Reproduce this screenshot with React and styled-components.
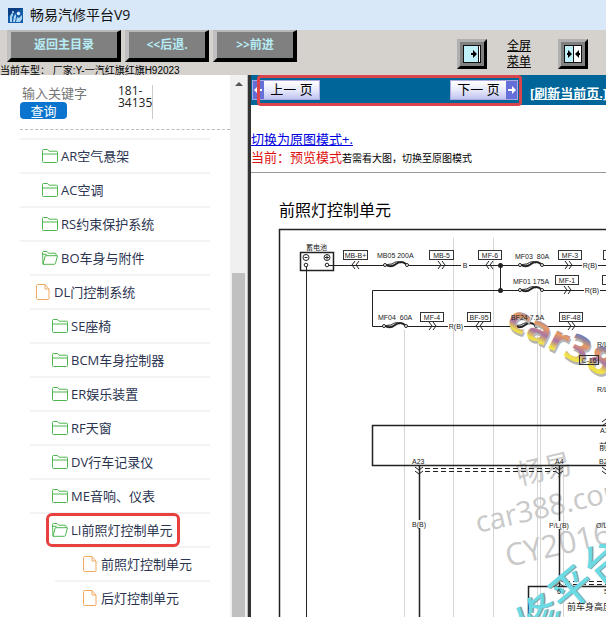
import React from 'react';
import styled, { createGlobalStyle } from 'styled-components';

const Global = createGlobalStyle`
  * { box-sizing: border-box; }
  html, body { margin: 0; height: 100%; }
  #root { height: 100vh; }
  body { font-family: "Open Sans", "Noto Sans CJK SC", sans-serif; overflow: hidden; }
  button { font-family: inherit; padding: 0; margin: 0; cursor: pointer; }
`;

const Window = styled.div`
  display: flex;
  flex-direction: column;
  height: 100vh;
  background: #fff;
`;

const TitleBar = styled.header`
  display: flex;
  align-items: center;
  gap: 7px;
  flex: none;
  height: 30px;
  padding-left: 8px;
  background: #d9e8f8;
  h1 { margin: 0; font-size: 14px; line-height: 20px; font-weight: 400; color: #111; }
`;

const ToolBar = styled.nav`
  flex: none;
  display: flex;
  justify-content: space-between;
  height: 45px;
  padding-right: 18px;
  background: #d5d2cd;
`;

const ToolLeft = styled.div`
  display: flex;
  flex-direction: column;
`;

const ButtonRow = styled.div`
  display: flex;
  gap: 4px;
  padding-left: 7px;
`;

const BevelButton = styled.button`
  width: ${(p) => (p.$wide ? 114 : 84)}px;
  height: 32px;
  border: 4px solid;
  border-top-width: 2px;
  border-color: #b8b8b8 #000 #000 #c0c0c0;
  background: #808080;
  color: #b6ecf5;
  font-size: 12px;
  font-weight: 700;
  line-height: 24px;
`;

const Status = styled.p`
  margin: 0;
  padding-top: 2px;
  font: 10px/13px "Liberation Sans", "Noto Sans CJK SC", sans-serif;
  white-space: pre;
`;

const ToolRight = styled.div`
  display: flex;
  align-items: center;
  gap: 20px;
  padding-top: 2px;
`;

const IconButton = styled.button`
  display: grid;
  place-items: center;
  width: 30px;
  height: 30px;
  border: 3px solid;
  border-color: #b0b0b0 #000 #000 #b0b0b0;
  background: #808080;
  svg { display: block; }
`;

const FullLink = styled.a`
  width: 31px;
  padding-right: 7px;
  font-size: 12px;
  line-height: 16px;
  color: #000;
`;

const Body = styled.div`
  flex: 1;
  display: flex;
  min-height: 0;
`;

const Sidebar = styled.aside`
  flex: none;
  display: flex;
  width: 251px;
  border-right: 3px solid #333;
`;

const SidePane = styled.div`
  flex: 1;
  min-width: 0;
  overflow: hidden;
  padding-left: 20px;
`;

const ScrollTrack = styled.div`
  width: 18px;
  padding: 6px 2px 0;
  border-right: 1px solid #bbb;
  background: #f0f0f0;
  display: flex;
  flex-direction: column;
  align-items: center;
`;

const Thumb = styled.div`
  width: 13px;
  flex: 1;
  margin-top: 187px;
  background: #c0c0c0;
`;

const Search = styled.form`
  display: flex;
  height: 55px;
  padding-top: 9px;
  border-bottom: 1px dashed #bbb;
`;

const SearchFields = styled.div`
  display: flex;
  flex-direction: column;
  align-items: flex-start;
  width: 98px;
`;

const Keyword = styled.input`
  width: 90px;
  height: 18px;
  padding: 0 2px;
  border: 0;
  outline: 0;
  background: none;
  font: 13px/18px "Open Sans", "Noto Sans CJK SC", sans-serif;
  &::placeholder { color: #757575; opacity: 1; }
`;

const Query = styled.button`
  width: 47px;
  height: 17px;
  border: 0;
  border-radius: 4px;
  background: #0a74ce;
  color: #fff;
  font-size: 13px;
  line-height: 16px;
`;

const Count = styled.div`
  width: 35px;
  height: 34px;
  margin-top: 1px;
  border-right: 1px solid #ccc;
  font-size: 12px;
  line-height: 12px;
  color: #222;
`;

const Tree = styled.ul`
  list-style: none;
  margin: 8px 20px 0 0;
  padding: 0;
`;

const TreeItem = styled.li`
  height: 34px;
  margin-left: ${(p) => p.$indent}px;
  padding-left: ${(p) => p.$pad}px;
  border-top: 2px solid #f3f3f3;
  display: flex;
  align-items: center;
`;

const TreeLink = styled.a`
  display: flex;
  align-items: center;
  gap: ${(p) => (p.$file ? 4 : 3)}px;
  color: #2b3450;
  font-size: 13px;
  line-height: 20px;
  text-decoration: none;
  white-space: nowrap;
  svg { flex: none; }
  ${(p) => p.$marked && `
    padding: 5px 6px 5px 4px;
    margin: 0 -4px;
    outline: 3px solid #e8403f;
    outline-offset: -1px;
    border-radius: 4px;
  `}
`;

const Main = styled.main`
  flex: 1;
  min-width: 0;
  display: flex;
  flex-direction: column;
  overflow: hidden;
`;

const PageBar = styled.nav`
  flex: none;
  display: flex;
  align-items: center;
  height: 30px;
  background: #00669a;
  white-space: nowrap;
`;

const Pager = styled.div`
  position: relative;
  display: flex;
  justify-content: space-between;
  align-items: center;
  flex: none;
  width: 265px;
  height: 31px;
  margin-left: 6px;
  padding: 0 4px 0 3px;
  &::after {
    content: "";
    position: absolute;
    inset: 0;
    border: 3px solid #dc444b;
    border-radius: 4px;
    pointer-events: none;
  }
`;

const PageButton = styled.button`
  display: flex;
  align-items: stretch;
  height: 20px;
  width: 68px;
  margin-left: ${(p) => (p.$prev ? -8 : 0)}px;
  border: 1px solid #a9abe0;
  background: linear-gradient(#fff, #e8e9fb 50%, #bfc4f0);
  font-size: 13px;
  line-height: 17px;
  color: #000;
  span { flex: 1; white-space: pre; }
  svg { flex: none; background: #6470d8; }
`;

const Refresh = styled.a`
  margin-left: 8px;
  padding-top: 6px;
  font-size: 13px;
  line-height: 18px;
  font-weight: 700;
  color: #fff;
`;

const Mode = styled.section`
  flex: none;
  height: 68px;
  padding-top: 25px;
  border-bottom: 1px solid #999;
  font-size: 13px;
  line-height: 18px;
  white-space: nowrap;
  a { display: block; width: max-content; color: #0000e0; }
  strong { font-weight: 400; color: #e01010; }
  small { font-size: 10px; }
`;

const Heading = styled.h2`
  flex: none;
  margin: 0;
  padding: 25px 0 0 28px;
  font-size: 16px;
  line-height: 24px;
  font-weight: 400;
  color: #000;
`;

const Diagram = styled.svg`
  display: block;
  width: 100%;
  flex: 1;
  min-height: 0;
`;

const Folder = () => (
  <svg width="16" height="14" viewBox="0 0 16 14" fill="none" stroke="#4fb64f">
    <path d="M.5 12.5V1.5q0-1 1-1h4l1.5 1.7h7.500q1 0 1 1v9.300q0 1-1 1h-13q-1 0-1-1zM.5 5h15" />
  </svg>
);
const OpenFolder = () => (
  <svg width="16" height="14" viewBox="0 0 16 14" fill="none" stroke="#4fb64f">
    <path d="M1 13.200.5 1.500q0-1 1-1H5l1.500 1.700H13q1 0 1 1V4.500M1 13.200 3.300 4.700h12.200L13.500 12.300q-.3 1-1.300 1H1zM.7 3.300h4" />
  </svg>
);
const FileIcon = () => (
  <svg width="14" height="16" viewBox="0 0 14 16" fill="none" stroke="#f0a860">
    <path d="M1.500.500h7.500l4 4.500v9.500q0 1-1 1h-10.500q-1 0-1-1v-13q0-1 1-1zM9 .500V5h4" />
  </svg>
);

const Logo = () => (
  <svg width="15" height="15" viewBox="0 0 15 15">
    <rect width="15" height="15" fill="#145ca8" />
    <path d="M0 0h15L0 8z" fill="#0b3f83" />
    <path d="M2 14V9l1-3 2-1v2l-1 2v5zM5 14l1-6 2-2v3l-1 5zM8 14l1-5 2 1 3-3v4l-2 3z" fill="#a9d6f2" />
    <circle cx="10.500" cy="5.500" r="1.700" fill="#d6effb" />
    <circle cx="5" cy="4" r="1" fill="#d6effb" />
  </svg>
);

const PANEL = '#c0f0fa';

const rows = [
  ['AR空气悬架', 'folder', 0, 22],
  ['AC空调', 'folder', 0, 22],
  ['RS约束保护系统', 'folder', 0, 22],
  ['BO车身与附件', 'open', 0, 22],
  ['DL门控制系统', 'file', 10, 6],
  ['SE座椅', 'folder', 10, 22],
  ['BCM车身控制器', 'folder', 10, 22],
  ['ER娱乐装置', 'folder', 10, 22],
  ['RF天窗', 'folder', 10, 22],
  ['DV行车记录仪', 'folder', 10, 22],
  ['ME音响、仪表', 'folder', 10, 22],
  ['LI前照灯控制单元', 'open', 10, 22, true],
  ['前照灯控制单元', 'file', 35, 28],
  ['后灯控制单元', 'file', 35, 28],
];
const icons = { folder: Folder, open: OpenFolder, file: FileIcon };

const Tag = ({ x, y, w = 26, children }) => (
  <g>
    <rect x={x} y={y} width={w} height="9" fill="#fff" stroke="#333" />
    <text x={x + w / 2} y={y + 7} textAnchor="middle">{children}</text>
  </g>
);
const Chevrons = ({ x, y, left, turn = 0 }) => (
  <path
    d={left ? 'M0-4-3 0 0 4M4-4 1 0 4 4' : 'M-3-4 0 0-3 4M1-4 4 0 1 4'}
    transform={`translate(${x} ${y}) rotate(${turn})`}
    fill="none" stroke="#222"
  />
);
const Fuse = ({ x, y }) => (
  <g transform={`translate(${x} ${y})`} fill="none" stroke="#222">
    <path d="M-10 0h20" stroke="#fff" strokeWidth="3" />
    <path d="M-10 0q5 3 10-1t10 0" strokeWidth="2" />
    <path d="M-10 0q3-1 6-1 5-4 9-1" />
    <circle cx="-11" r="1.500" fill="#fff" />
    <circle cx="11" r="1.500" fill="#fff" />
  </g>
);
const WireLabel = ({ x, y, w = 16, children }) => (
  <g>
    <rect x={x - w / 2} y={y - 4} width={w} height="8" fill="#fff" />
    <text x={x} y={y + 3} textAnchor="middle">{children}</text>
  </g>
);

const Wiring = () => (
  <Diagram role="img" aria-label="前照灯控制单元电路图">
    <defs>
      <linearGradient id="candy" x1="0" y1="0" x2="0.1" y2="1">
        <stop offset="0.250" stopColor="#7d7fae" />
        <stop offset="0.420" stopColor="#e89a62" />
        <stop offset="0.600" stopColor="#a874a6" />
        <stop offset="0.780" stopColor="#f0e04c" />
      </linearGradient>
    </defs>
    <g transform="translate(-251 -222)" fontFamily='"Liberation Sans", "Noto Sans CJK SC", sans-serif' fontSize="7" fill="#222">
      <path d="M404.500 330v287M453.500 238v379M493.500 238v379M537.500 290v327M540.500 290v327M563.500 465v152" stroke="#d6d6d6" />
      <g fontFamily='"Open Sans", "Noto Sans CJK SC", sans-serif' fontSize="29" fill="#c9c9c9">
        <text transform="translate(519 485) rotate(-13)" fontSize="28">畅易</text>
        <text transform="translate(478 533) rotate(-13)">car388.com</text>
        <text transform="translate(508 567) rotate(-13)" fontSize="31">CY2016</text>
      </g>
      <g fill="none" stroke="#222">
        <path d="M1200 229.500H279.500V1000" strokeWidth="1.500" />
        <path d="M334 265.500h900M306.500 268V1000M1200 290.500H372.500v36H606.500V425M500.500 265v26" />
        <path d="M1200 425.500H372.500v40H1200" strokeWidth="1.500" />
        <path d="M419.500 465V1000M559.500 465v121" strokeWidth="1.500" />
        <path d="M1200 586.500H528.500V1000" strokeWidth="1.500" />
        <path d="M425 468.500h130M425 471.500h130M565 581.500h60M565 584.500h60" strokeDasharray="5 3" />
        <rect x="300.500" y="252.500" width="33" height="18" strokeWidth="1.500" fill="#fff" />
        <circle cx="306" cy="257.500" r="3" />
        <circle cx="327" cy="257.500" r="3" />
        <path d="M304.500 257.500h3M325 257.500h4M327 255.500v4M327 265.500h7M306.500 266v5" />
        <circle cx="306" cy="265" r="1.800" fill="#fff" />
        <circle cx="327" cy="265" r="1.800" fill="#fff" />
      </g>
      <circle cx="500.500" cy="265.500" r="2.500" />
      <circle cx="500.500" cy="290.500" r="2.500" />
      <text x="306" y="250">蓄电池</text>
      <Tag x={343.5} y={250.5} w={24}>MB-B+</Tag>
      <Tag x={429.5} y={250.5} w={24}>MB-5</Tag>
      <Tag x={478.5} y={250.5} w={23}>MF-6</Tag>
      <Tag x={558.5} y={250.5} w={23}>MF-3</Tag>
      <Tag x={603.5} y={250.5} w={23}>A-1</Tag>
      <Tag x={555.5} y={275.5} w={23}>MF-1</Tag>
      <Tag x={602.5} y={275.5} w={23}>A-2</Tag>
      <Tag x={420.5} y={312.5} w={23}>MF-4</Tag>
      <Tag x={467.5} y={312.5} w={23}>BF-95</Tag>
      <Tag x={559.5} y={312.5} w={23}>BF-48</Tag>
      <text x="377" y="258">MB05 200A</text>
      <text x="515" y="259" xmlSpace="preserve">MF03  80A</text>
      <text x="513" y="284">MF01 175A</text>
      <text x="378" y="320" xmlSpace="preserve">MF04  60A</text>
      <Fuse x={396} y={265} />
      <Fuse x={531} y={265} />
      <Fuse x={531} y={290} />
      <Fuse x={395} y={326} />
      <Chevrons x={355} y={265} left />
      <Chevrons x={441} y={265} />
      <Chevrons x={489} y={265} left />
      <Chevrons x={568} y={265} />
      <Chevrons x={567} y={290} />
      <Chevrons x={432} y={326} />
      <Chevrons x={479} y={326} left />
      <Chevrons x={571} y={326} />
      <WireLabel x={465} y={265} w={8}>B</WireLabel>
      <WireLabel x={590} y={265}>R(B)</WireLabel>
      <WireLabel x={592} y={290}>R(B)</WireLabel>
      <WireLabel x={456} y={326}>R(B)</WireLabel>
      <text x="597" y="392">R/L</text>
      <text x="600" y="433">A3</text>
      <text x="599" y="450" fontSize="9">前照灯</text>
      <text x="412" y="464">A23</text>
      <text x="555" y="464">A4</text>
      <text x="599" y="464">B2</text>
      <Chevrons x={419} y={470} turn={90} />
      <Chevrons x={559} y={470} turn={90} />
      <Chevrons x={606} y={470} turn={90} />
      <Chevrons x={606} y={423} turn={-90} />
      <Chevrons x={559} y={583} turn={-90} />
      <WireLabel x={419} y={524}>B(B)</WireLabel>
      <WireLabel x={559} y={525} w={4}>P/L(B)</WireLabel>
      <text x="596" y="528">O/L</text>
      <Fuse x={525} y={326} />
      <g fontFamily='"DejaVu Sans"' fontWeight="700" fontSize="36">
        <text transform="translate(505 326) rotate(27)" fill="#b5b5b5" x="2" y="2">car388</text>
        <text transform="translate(505 326) rotate(27)" fill="url(#candy)">car388</text>
      </g>
      <text x="511" y="320">BF24 7.5A</text>
      <rect x="579.5" y="355.5" width="19" height="9" fill="none" stroke="#333" />
      <text x="589" y="363" textAnchor="middle">C-16</text>
      <text x="597" y="347">R/L</text>
      <g fontFamily='"Noto Sans CJK SC"' fontWeight="500" fontSize="43">
        <text transform="translate(532 642) rotate(-40)" fill="#999" x="1" y="1">修平台</text>
        <text transform="translate(532 642) rotate(-40)" fill="#6cdae4">修平台</text>
      </g>
      <text x="557" y="594">6</text>
      <text x="604" y="594">5</text>
      <text x="567" y="610" fontSize="9">前车身高度</text>
    </g>
  </Diagram>
);

export default function App() {
  return (
    <>
      <Global />
      <Window>
        <TitleBar><Logo /><h1>畅易汽修平台V9</h1></TitleBar>
        <ToolBar>
          <ToolLeft>
            <ButtonRow>
              <BevelButton $wide>返回主目录</BevelButton>
              <BevelButton>&lt;&lt;后退.</BevelButton>
              <BevelButton>&gt;&gt;前进</BevelButton>
            </ButtonRow>
            <Status>当前车型： 厂家:Y-一汽红旗红旗H92023</Status>
          </ToolLeft>
          <ToolRight>
            <IconButton aria-label="展开右栏">
              <svg width="18" height="18" viewBox="0 0 18 18">
                <rect x=".5" y=".5" width="17" height="17" fill={PANEL} stroke="#111" />
                <path d="M16 1h1v16h-1z" fill="#fff" />
                <path d="M15.500 1v16" stroke="#111" />
                <path d="M8 8h2V5l4 4-4 4v-3H8z" />
              </svg>
            </IconButton>
            <FullLink href="#full">全屏菜单</FullLink>
            <IconButton aria-label="恢复分栏">
              <svg width="18" height="18" viewBox="0 0 18 18">
                <rect x=".5" y=".5" width="17" height="17" fill="#fff" stroke="#111" />
                <path d="M1 1h8v16H1z" fill={PANEL} />
                <path d="M9.500 1v16" stroke="#111" />
                <path d="M3 8h1V5l4 4-4 4v-3H3zM16 8h-1V5l-4 4 4 4v-3h1z" />
              </svg>
            </IconButton>
          </ToolRight>
        </ToolBar>
        <Body>
          <Sidebar>
            <SidePane>
              <Search onSubmit={(e) => e.preventDefault()}>
                <SearchFields>
                  <Keyword aria-label="输入关键字" placeholder="输入关键字" />
                  <Query>查询</Query>
                </SearchFields>
                <Count>181-34135</Count>
              </Search>
              <Tree>
                {rows.map(([label, kind, indent, pad, marked]) => {
                  const Icon = icons[kind];
                  return (
                    <TreeItem key={label} $indent={indent} $pad={pad}>
                      <TreeLink href="#tree" $file={kind === 'file'} $marked={marked}><Icon />{label}</TreeLink>
                    </TreeItem>
                  );
                })}
              </Tree>
            </SidePane>
            <ScrollTrack>
              <svg width="8" height="5" viewBox="0 0 8 5"><path d="M0 5l4-4 4 4z" fill="#555" /></svg>
              <Thumb />
            </ScrollTrack>
          </Sidebar>
          <Main>
            <PageBar>
              <Pager>
                <PageButton $prev>
                  <svg width="11" height="18" viewBox="0 0 11 18"><path d="M1 9l4-4v3h4v2H5v3z" fill="#fff" /></svg>
                  <span>上一 页</span>
                </PageButton>
                <PageButton>
                  <span>下一 页</span>
                  <svg width="11" height="18" viewBox="0 0 11 18"><path d="M10 9L6 5v3H2v2h4v3z" fill="#fff" /></svg>
                </PageButton>
              </Pager>
              <Refresh href="#refresh">[刷新当前页.]</Refresh>
            </PageBar>
            <Mode>
              <a href="#mode">切换为原图模式+.</a>
              <strong>当前：预览模式</strong><small>若需看大图，切换至原图模式</small>
            </Mode>
            <Heading>前照灯控制单元</Heading>
            <Wiring />
          </Main>
        </Body>
      </Window>
    </>
  );
}
